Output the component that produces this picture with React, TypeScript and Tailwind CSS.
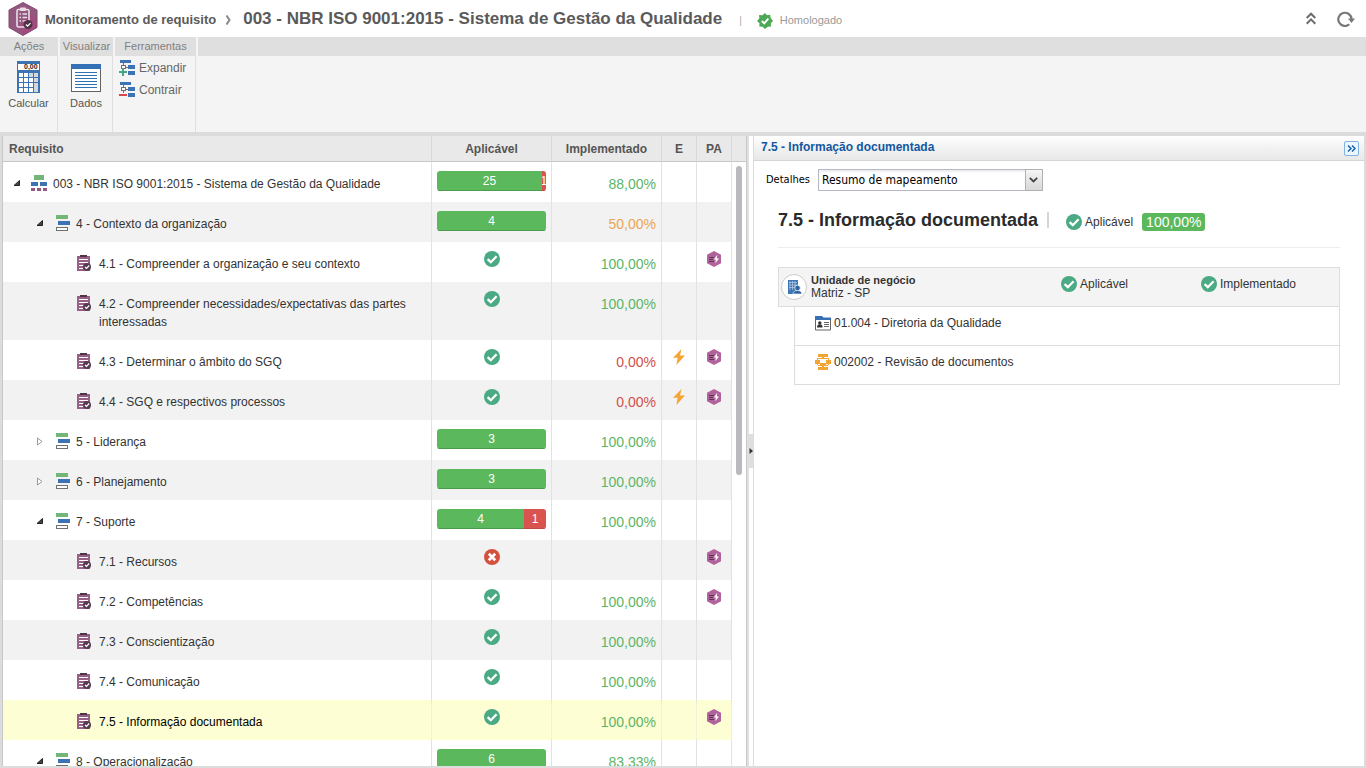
import { useState } from 'react'
import type { ReactNode } from 'react'
import clsx from 'clsx'

type Row = {
  id: string
  label: string
  level: 0 | 1 | 2
  open?: boolean
  bar?: [number, number]
  applicable?: boolean
  done?: string
  tone?: 'green' | 'orange' | 'red'
  event?: boolean
  plan?: boolean
}

const rows: Row[] = [
  { id: '0', label: '003 - NBR ISO 9001:2015 - Sistema de Gestão da Qualidade', level: 0, open: true, bar: [25, 1], done: '88,00%' },
  { id: '4', label: '4 - Contexto da organização', level: 1, open: true, bar: [4, 0], done: '50,00%', tone: 'orange' },
  { id: '4.1', label: '4.1 - Compreender a organização e seu contexto', level: 2, applicable: true, done: '100,00%', plan: true },
  { id: '4.2', label: '4.2 - Compreender necessidades/expectativas das partes interessadas', level: 2, applicable: true, done: '100,00%' },
  { id: '4.3', label: '4.3 - Determinar o âmbito do SGQ', level: 2, applicable: true, done: '0,00%', tone: 'red', event: true, plan: true },
  { id: '4.4', label: '4.4 - SGQ e respectivos processos', level: 2, applicable: true, done: '0,00%', tone: 'red', event: true, plan: true },
  { id: '5', label: '5 - Liderança', level: 1, open: false, bar: [3, 0], done: '100,00%' },
  { id: '6', label: '6 - Planejamento', level: 1, open: false, bar: [3, 0], done: '100,00%' },
  { id: '7', label: '7 - Suporte', level: 1, open: true, bar: [4, 1], done: '100,00%' },
  { id: '7.1', label: '7.1 - Recursos', level: 2, applicable: false, plan: true },
  { id: '7.2', label: '7.2 - Competências', level: 2, applicable: true, done: '100,00%', plan: true },
  { id: '7.3', label: '7.3 - Conscientização', level: 2, applicable: true, done: '100,00%' },
  { id: '7.4', label: '7.4 - Comunicação', level: 2, applicable: true, done: '100,00%' },
  { id: '7.5', label: '7.5 - Informação documentada', level: 2, applicable: true, done: '100,00%', plan: true },
  { id: '8', label: '8 - Operacionalização', level: 1, open: true, bar: [6, 0], done: '83,33%' },
]

const tones = {
  green: 'text-[#5cb567]',
  orange: 'text-[#eaa655]',
  red: 'text-[#d2504a]',
}

function LogoIcon() {
  return (
    <svg width="30" height="34" viewBox="0 0 30 34" className="shrink-0">
      <path d="M15 0.500 29 8v17.500L15 33.500 1 25.500V8z" fill="#93587f" stroke="#834870" />
      <path d="M22 11 29 17v8.500L16 33l-6-7z" fill="#a4477f" opacity=".7" />
      <rect x="9" y="7.500" width="12" height="17.500" rx="1.500" fill="none" stroke="#eadfe6" strokeWidth="1.600" />
      <rect x="12" y="5.500" width="6" height="3.500" rx="1" fill="#eadfe6" />
      <path d="M11.500 12h1.500M14.500 12H19M11.500 15.500h1.500M14.500 15.500H19M11.500 19h1.500M14.500 19H19" stroke="#eadfe6" strokeWidth="1.500" />
      <circle cx="20" cy="22.500" r="4.500" fill="#503347" />
      <path d="m18 22.500 1.600 1.600 2.900-3" fill="none" stroke="#fff" strokeWidth="1.300" />
    </svg>
  )
}

function SealIcon() {
  return (
    <svg width="16" height="16" viewBox="0 0 16 16">
      <path d="m8 0 2 2.200 3.200-.500.300 3L16 8l-2.200 2.300.2 3.200-3.200.2L8 16l-2.500-2.300-3.200-.2.200-3.200L0 8l2.300-2.500-.2-3.400 3.400.2z" fill="#4da853" />
      <path d="m4.800 8 2.400 2.300 4.200-4.600" fill="none" stroke="#fff" strokeWidth="1.900" />
    </svg>
  )
}

function CheckIcon() {
  return (
    <svg width="16" height="16" viewBox="0 0 16 16" className="shrink-0">
      <circle cx="8" cy="8" r="8" fill="#4aaa84" />
      <path d="M3.600 8.200 6.800 11.200l5.800-6" fill="none" stroke="#fff" strokeWidth="2.300" />
    </svg>
  )
}

function CrossIcon() {
  return (
    <svg width="16" height="16" viewBox="0 0 16 16">
      <circle cx="8" cy="8" r="8" fill="#d5513f" />
      <path d="m4.800 4.800 6.400 6.400M11.200 4.800l-6.400 6.400" stroke="#fff" strokeWidth="2.700" />
    </svg>
  )
}

function BoltIcon() {
  return (
    <svg width="12" height="16" viewBox="0 0 12 16">
      <path d="M8.500 0 0 8.800h4.600L3.400 16 12 6.600H7z" fill="#f4a535" />
    </svg>
  )
}

function PlanIcon() {
  return (
    <svg width="14" height="16" viewBox="0 0 14 16">
      <path d="m7 0 7 3.700v8.600L7 16l-7-3.700V3.700z" fill="#b0639a" />
      <path d="M2 6.500h5M2 8.500h4M2 10.500h5" stroke="#5f3553" />
      <path d="M10.300 3.800 6.900 8.500h2L8.300 12.300 12 7.500H9.800z" fill="#fff" />
    </svg>
  )
}

function RowIcon({ level }: { level: Row['level'] }) {
  if (level === 0) {
    return (
      <svg width="16" height="16" viewBox="0 0 16 16" className="shrink-0" shapeRendering="crispEdges">
        <path d="M3 0h10v5H3z" fill="#74b578" />
        <path d="M0 7h7v4H0zM9 7h7v4H9z" fill="#3c73b5" />
        <path d="M0 13h4v3H0zM6 13h4v3H6zM12 13h4v3h-4z" fill="#935a80" />
      </svg>
    )
  }
  if (level === 1) {
    return (
      <svg width="16" height="16" viewBox="0 0 16 16" className="shrink-0" shapeRendering="crispEdges">
        <path d="M2 0h12v4H2z" fill="#74b578" />
        <path d="M4 6h12v4H4z" fill="#3c73b5" />
        <path d="M2 12h12v4H2z" fill="#707070" />
        <path d="M3 13h10v2H3z" fill="#fff" />
      </svg>
    )
  }
  return (
    <svg width="16" height="16" viewBox="0 0 16 16" className="shrink-0">
      <path d="M1 1h13v15H1z" fill="#985f87" />
      <path d="M4 0h7v2H4z" fill="#4f3548" />
      <path d="M3 4.500h9M3 7.500h9M3 10.500h5M3 13.500h4" stroke="#fff" />
      <circle cx="11" cy="12" r="4" fill="#573b50" />
      <path d="m9 12 1.500 1.500 2.700-3" fill="none" stroke="#fff" strokeWidth="1.200" />
    </svg>
  )
}

function Arrow({ open }: { open?: boolean }) {
  return (
    <svg width="8" height="9" viewBox="0 0 8 9">
      {open ? <path d="M6.500 1.500v5H1z" fill="#444" stroke="#222" /> : <path d="M1.500 1v7l4.500-3.500z" fill="#fff" stroke="#999" />}
    </svg>
  )
}

function CalculatorIcon() {
  return (
    <svg width="24" height="32" viewBox="0 0 24 32" shapeRendering="crispEdges">
      <path d="M0 0h23v32H0z" fill="#3c73b3" />
      <path d="M1 3h21v6H1z" fill="#fff" />
      <text x="7" y="8" fontSize="7" fontWeight="700" fill="#222">0,00</text>
      <path d="M2 12h4v4H2zM7 12h4v4H7zM2 17h4v4H2zM7 17h4v4H7zM12 17h4v4h-4zM2 22h4v4H2zM7 22h4v4H7zM12 22h4v4h-4zM2 27h4v4H2zM7 27h4v4H7zM12 27h4v4h-4z" fill="#fff" />
      <path d="M12 12h4v4h-4zM17 12h4v4h-4zM17 17h4v4h-4zM17 22h4v9h-4z" fill="#d3d8dd" />
    </svg>
  )
}

function DataIcon() {
  return (
    <svg width="30" height="28" viewBox="0 0 30 28" shapeRendering="crispEdges">
      <path d="M0 0h30v28H0z" fill="#636363" />
      <path d="M1 5h28v22H1z" fill="#fff" />
      <path d="M0 0h30v5H0z" fill="#3370b5" />
      <path d="M4 8h22v1H4zM4 11h22v1H4zM4 14h22v1H4zM4 17h22v1H4zM4 20h22v1H4zM4 23h22v1H4z" fill="#3370b5" />
    </svg>
  )
}

function TreeToolIcon({ plus }: { plus?: boolean }) {
  return (
    <svg width="16" height="16" viewBox="0 0 16 16" shapeRendering="crispEdges">
      <path d="M1 0h11v3H1zM9 5h7v4H9zM9 11h7v4H9z" fill="#3b73b5" />
      <path d="M4 3h1v8H4zM5 7h4v1H5zM2 5h5v4H2z" fill="#707070" />
      <path d="M3 6h3v2H3z" fill="#fff" />
      {plus ? <path d="M0 12h8M4 8v8" stroke="#45a884" strokeWidth="2" /> : <path d="M0 13h8" stroke="#e04646" strokeWidth="2" />}
    </svg>
  )
}

function BuildingIcon() {
  return (
    <span className="flex size-[26px] shrink-0 items-center justify-center rounded-full border border-[#ccc] bg-white">
      <svg width="15" height="15" viewBox="0 0 15 15">
        <path d="M1 0h10v14H1z" fill="#3e76b6" />
        <path d="M3 1v9M5.500 1v9M8 1v6M2 2.500h8M2 5h8M2 7.500h6" stroke="#c9daec" strokeWidth=".6" />
        <circle cx="10.500" cy="8" r="2.800" fill="#2e64a0" stroke="#fff" strokeWidth=".7" />
        <path d="M6 14c.3-2.600 2-3.500 4.500-3.500S14.700 11.500 15 14z" fill="#2e64a0" stroke="#fff" strokeWidth=".6" />
      </svg>
    </span>
  )
}

function DepartmentIcon() {
  return (
    <svg width="16" height="15" viewBox="0 0 16 15">
      <path d="M.5 3h15v11H.5z" fill="#fff" stroke="#666" />
      <path d="M0 0h7l1.500 1.500H16V4H0z" fill="#3970b3" />
      <circle cx="4.800" cy="7" r="1.700" fill="#333" />
      <path d="M2 11.500c0-2.500 1-3 2.800-3s2.800.5 2.800 3z" fill="#333" />
      <path d="M9 6.500h5M9 8.500h5M9 10.500h5" stroke="#666" />
    </svg>
  )
}

function ProcessIcon() {
  return (
    <svg width="16" height="16" viewBox="0 0 16 16" fill="#f2a533" shapeRendering="crispEdges">
      <path d="M3 0h10v3H3zM3 13h10v3H3zM0 6h5v4H0zM11 6h5v4h-5zM5 9h6v3H5zM7 12h2v1H7z" />
      <path d="M2 4h12v1H2zM2 5h1v1H2zM13 5h1v1h-1zM7 3h2v1H7zM2 10h1v1H2zM13 10h1v1h-1zM3 11h10v1H3z" />
    </svg>
  )
}

function CountBar({ yes, no }: { yes: number; no: number }) {
  return (
    <div className="flex h-5 overflow-hidden rounded-[3px] text-center text-xs leading-5 text-white">
      <div className="bg-[#5cb85c] shadow-[inset_0_-1px_0_#4a9c4a]" style={{ width: `${(yes / (yes + no)) * 100}%` }}>
        {yes}
      </div>
      {no > 0 && (
        <div className="flex flex-1 justify-center overflow-hidden bg-[#d9534f] shadow-[inset_0_-1px_0_#c04744]">{no}</div>
      )}
    </div>
  )
}

function Status({ children }: { children: ReactNode }) {
  return (
    <span className="flex items-center gap-[3px] text-xs text-[#333]">
      <CheckIcon />
      {children}
    </span>
  )
}

function ToolGroup({ title, className, children }: { title?: string; className: string; children?: ReactNode }) {
  return (
    <section className={clsx('flex flex-col', className)}>
      <h2 className="h-[19px] bg-[#dfdfdf] text-center text-[11px] leading-[19px] text-[#808080]">{title}</h2>
      <div className={clsx('flex-1', title && 'border-r border-[#dfdfdf]')}>{children}</div>
    </section>
  )
}

const indent = { 0: 'pl-[9px]', 1: 'pl-8', 2: 'pl-[73px]' }
const gaps = { 0: 'gap-[6px]', 1: 'gap-[6px]', 2: 'gap-[7px]' }

export default function App() {
  const [selected, setSelected] = useState('7.5')

  return (
    <div className="flex h-screen flex-col overflow-hidden bg-[#dcdcdc] font-['Liberation_Sans',Arial,sans-serif] text-xs text-[#333]">
      <header className="flex h-[37px] shrink-0 items-center bg-white pr-[11px] pl-2">
        <LogoIcon />
        <nav className="flex items-center pt-0.5 pl-[7px] font-bold whitespace-nowrap text-[#5a5a5a]">
          <a href="#" className="text-[13px]">Monitoramento de requisito</a>
          <svg width="7" height="10" viewBox="0 0 7 10" className="mr-[11px] ml-[9px]">
            <path d="m1.500 .5 3 4.500-3 4.500" fill="none" stroke="#888" strokeWidth="2" />
          </svg>
          <h1 className="text-[17px]">003 - NBR ISO 9001:2015 - Sistema de Gestão da Qualidade</h1>
        </nav>
        <span className="ml-[17px] pt-1 text-[10px] text-[#aaa]">|</span>
        <span className="ml-[15px] flex items-center gap-[7px] pt-1 text-[11px] text-[#999]">
          <SealIcon />
          Homologado
        </span>
        <div className="ml-auto flex items-center gap-[21px]">
          <button type="button" aria-label="Recolher cabeçalho">
            <svg width="10" height="13" viewBox="0 0 10 13" className="block" fill="none" stroke="#6b6b6b" strokeWidth="2">
              <path d="m.7 6 4.300-4.300L9.300 6M.7 11.700 5 7.400l4.300 4.300" />
            </svg>
          </button>
          <button type="button" aria-label="Atualizar">
            <svg width="18" height="16" viewBox="0 0 18 16" className="block">
              <path d="M12.300 13.300A6.600 6.600 0 1 1 14.500 8" fill="none" stroke="#777" strokeWidth="2.200" />
              <path d="M11 7.500h7L14.500 12z" fill="#777" />
            </svg>
          </button>
        </div>
      </header>

      <div className="flex h-[95px] shrink-0 gap-[2px] bg-[#f4f4f4]">
        <ToolGroup title="Ações" className="w-[58px]">
          <button type="button" className="flex w-full flex-col items-center gap-[3px] pt-[5px] text-[11px] text-[#555]">
            <CalculatorIcon />
            Calcular
          </button>
        </ToolGroup>
        <ToolGroup title="Visualizar" className="w-[53px]">
          <button type="button" className="flex w-full flex-col items-center gap-1 pt-2 text-[11px] text-[#555]">
            <DataIcon />
            Dados
          </button>
        </ToolGroup>
        <ToolGroup title="Ferramentas" className="w-[81px]">
          <div className="flex flex-col gap-1 pt-[3px] pl-1 text-xs text-[#666]">
            <button type="button" className="flex items-center gap-1 leading-[18px]">
              <TreeToolIcon plus />
              Expandir
            </button>
            <button type="button" className="flex items-center gap-1 leading-[18px]">
              <TreeToolIcon />
              Contrair
            </button>
          </div>
        </ToolGroup>
        <ToolGroup className="flex-1" />
      </div>

      <main className="flex min-h-0 flex-1 pt-1 pr-[2px] pb-[2px] pl-[2px]">
        <section className="relative w-[55%] max-w-[745px] shrink-0 overflow-hidden border-x border-[#c8c8c8] bg-white">
          <table className="w-full table-fixed border-separate border-spacing-0">
            <colgroup>
              <col />
              <col className="w-[120px]" />
              <col className="w-[110px]" />
              <col className="w-[35px]" />
              <col className="w-[35px]" />
              <col className="w-[14px]" />
            </colgroup>
            <thead>
              <tr className="h-[26px] bg-[#e9e9e9] text-[#555] [&>th]:border-b [&>th]:border-b-[#c8c8c8] [&>th:not(:last-child)]:border-r [&>th:not(:last-child)]:border-r-[#d8d8d8]">
                <th className="pl-1.5 text-left">Requisito</th>
                <th>Aplicável</th>
                <th>Implementado</th>
                <th>E</th>
                <th>PA</th>
                <th aria-label="Rolagem" />
              </tr>
            </thead>
            <tbody>
              {rows.map((row, i) => {
                const isSelected = row.id === selected
                return (
                  <tr
                    key={row.id}
                    onClick={() => setSelected(row.id)}
                    className={clsx(
                      'cursor-pointer align-top [&>td:not(:last-child)]:border-r [&>td:not(:last-child)]:border-[#e2e2e2]',
                      isSelected && '[&>td:not(:last-child)]:border-dotted [&>td:not(:last-child)]:border-[#d3cfae] [&>td:not(:last-child)]:bg-[#fefed5]',
                      !isSelected && i % 2 === 1 && '[&>td:not(:last-child)]:bg-[#f2f2f2]'
                    )}
                  >
                    <td>
                      <div className={clsx('flex items-start pt-[13px] pr-2 pb-[9px] leading-[18px]', indent[row.level], gaps[row.level])}>
                        {row.level < 2 && (
                          <button type="button" aria-label={row.open ? 'Contrair item' : 'Expandir item'} className="mr-[3px] flex h-4 w-2.5 items-center justify-center">
                            <Arrow open={row.open} />
                          </button>
                        )}
                        <RowIcon level={row.level} />
                        <span className={isSelected ? 'text-black' : ''}>{row.label}</span>
                      </div>
                    </td>
                    <td className="px-[5px] pt-[9px]">
                      {row.bar ? (
                        <CountBar yes={row.bar[0]} no={row.bar[1]} />
                      ) : (
                        <div className="flex justify-center">{row.applicable ? <CheckIcon /> : <CrossIcon />}</div>
                      )}
                    </td>
                    <td className={clsx('pt-[13px] pr-[5px] text-right text-sm leading-[18px]', tones[row.tone ?? 'green'])}>{row.done}</td>
                    <td className="pt-[9px]">
                      <div className="flex justify-center">{row.event && <BoltIcon />}</div>
                    </td>
                    <td className="pt-[9px]">
                      <div className="flex justify-center">{row.plan && <PlanIcon />}</div>
                    </td>
                    <td />
                  </tr>
                )
              })}
            </tbody>
          </table>
          <div className="absolute top-[30px] right-1 h-[309px] w-1.5 rounded-full bg-[#b9b9be]" />
        </section>

        {/* divisor entre os painéis */}
        <div className="flex w-[6px] shrink-0 items-center border-l-2 border-[#e0e0e0] bg-white">
          <button type="button" aria-label="Recolher painel" className="flex h-[34px] w-1 items-center bg-[#dedede]">
            <svg width="4" height="6" viewBox="0 0 4 6">
              <path d="M.5 0v6L4 3z" fill="#333" />
            </svg>
          </button>
        </div>

        <section className="min-w-0 flex-1 border-l border-[#dcdcdc] bg-white">
          <div className="flex h-[25px] items-center justify-between border-b border-[#d5d5d5] bg-linear-to-b from-white via-[#f2f2f2] to-[#e8e8e8] pr-[5px] pl-[7px]">
            <h2 className="pb-[3px] font-bold text-[#1258a0]">7.5 - Informação documentada</h2>
            <button type="button" aria-label="Recolher detalhes" className="flex size-[15px] items-center justify-center rounded-[2px] border border-[#7fb2e0] bg-[#eef6fd]">
              <svg width="9" height="7" viewBox="0 0 9 7" fill="none" stroke="#1765ac" strokeWidth="1.500">
                <path d="m1 .5 3 3-3 3M5 .5l3 3-3 3" />
              </svg>
            </button>
          </div>

          <div className="flex items-center gap-2 pt-2 pl-3 font-['DejaVu_Sans_Condensed','DejaVu_Sans',sans-serif] text-black">
            <label htmlFor="detalhes" className="text-[11px]">Detalhes</label>
            <div className="relative w-[225px]">
              <select id="detalhes" className="h-[22px] w-full appearance-none border border-[#b5b8c8] bg-white pl-[3px] text-xs shadow-[inset_0_2px_2px_#eee]">
                <option>Resumo de mapeamento</option>
              </select>
              <span className="pointer-events-none absolute inset-y-0 right-0 flex w-[18px] items-center justify-center border border-[#b0b0b0] bg-linear-to-b from-[#f5f5f5] to-[#d8d8d8]">
                <svg width="9" height="6" viewBox="0 0 9 6">
                  <path d="m.8.8 3.700 3.700L8.200.8" fill="none" stroke="#444" strokeWidth="1.800" />
                </svg>
              </span>
            </div>
          </div>

          <div className="px-6">
            <div className="flex h-[57px] items-center border-b border-[#eee] pt-px">
              <h3 className="text-lg font-bold whitespace-nowrap text-[#2b2b2b]">7.5 - Informação documentada</h3>
              <span className="mr-[17px] ml-[9px] h-4 w-0.5 bg-[#d5d5d5]" />
              <div className="flex items-center gap-[9px] pt-1">
                <Status>Aplicável</Status>
                <span className="rounded-[3px] bg-[#5cb85c] px-1 text-sm leading-[18px] text-white">100,00%</span>
              </div>
            </div>

            <div className="mt-[19px] grid h-10 grid-cols-[2fr_1fr_1fr] border border-[#ddd] bg-[#f4f4f4]">
              <div className="flex items-center gap-1 pl-[2px]">
                <BuildingIcon />
                <div className="leading-[13px]">
                  <p className="text-[11px] leading-[13px] font-bold">Unidade de negócio</p>
                  <p>Matriz - SP</p>
                </div>
              </div>
              <div className="flex items-center pb-1.5 pl-[2px]">
                <Status>Aplicável</Status>
              </div>
              <div className="flex items-center pb-1.5 pl-[2px]">
                <Status>Implementado</Status>
              </div>
            </div>
            <ul className="ml-4 border-x border-[#ddd]">
              <li className="flex h-[39px] items-center gap-[3px] border-b border-[#ddd] pb-1.5 pl-5">
                <DepartmentIcon />
                01.004 - Diretoria da Qualidade
              </li>
              <li className="flex h-[39px] items-center gap-[3px] border-b border-[#ddd] pb-1.5 pl-5">
                <ProcessIcon />
                002002 - Revisão de documentos
              </li>
            </ul>
          </div>
        </section>
      </main>
    </div>
  )
}
